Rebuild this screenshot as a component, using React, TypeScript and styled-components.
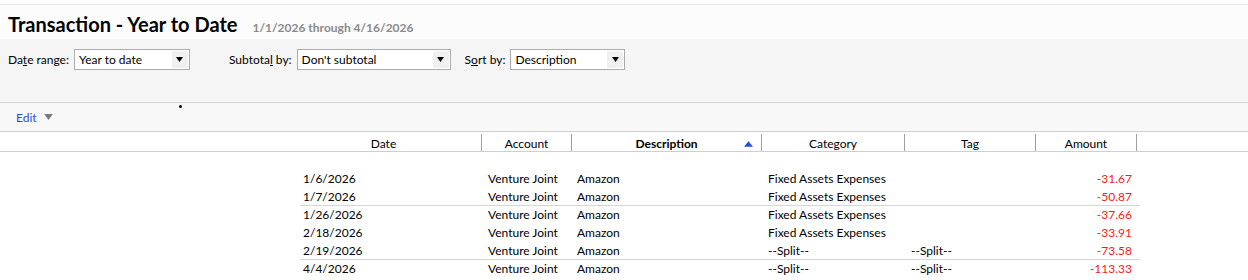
import React from "react";
import styled, { createGlobalStyle } from "styled-components";

const Global = createGlobalStyle`
  html, body { margin: 0; padding: 0; background: #ffffff; }
  body { font-family: Lato, "Noto Sans", sans-serif; font-size: 12px; color: #000; }
  * { box-sizing: border-box; }
`;

const Page = styled.div`
  width: 1248px;
  height: 280px;
  overflow: hidden;
  position: relative;
  padding-top: 4px;
`;

const TitleStrip = styled.div`
  height: 35px;
  border-top: 1px solid #e4eaf0;
  background: #fcfcfc;
  display: flex;
  align-items: baseline;
  padding: 7px 0 0 8px;
  gap: 15px;
`;

const Title = styled.h1`
  margin: 0;
  font-size: 20px;
  font-weight: 700;
  color: #000;
`;

const Subtitle = styled.span`
  font-size: 12px;
  font-weight: 700;
  color: #8a8a8a;
`;

const Controls = styled.div`
  height: 64px;
  background: #f5f5f5;
  border-bottom: 1px solid #d3d3d3;
  display: flex;
  align-items: flex-start;
  padding: 10px 0 0 8px;
`;

const Field = styled.label<{ $gap: number }>`
  display: flex;
  align-items: center;
  gap: 5px;
  margin-right: ${(p) => p.$gap}px;
`;

const Label = styled.span`
  font-size: 12px;
  color: #000;
  u { text-decoration: underline; }
`;

const Select = styled.div<{ $w: number }>`
  width: ${(p) => p.$w}px;
  height: 21px;
  border: 1px solid #acacac;
  background: #fff;
  display: flex;
  align-items: center;
  font-size: 12px;
  padding-left: 4px;
`;

const SelectText = styled.span`
  flex: 1;
`;

const Arrow = styled.span`
  width: 16px;
  height: 17px;
  margin-right: 1px;
  background: #f0f0f0;
  display: flex;
  align-items: center;
  justify-content: center;
`;

const EditBar = styled.div`
  height: 29px;
  background: #f8f8f8;
  border-bottom: 1px solid #cfcfcf;
  display: flex;
  align-items: center;
  padding: 0 0 0 16px;
  gap: 7px;
  position: relative;
`;

const EditLink = styled.span`
  color: #1f50d6;
  font-size: 12px;
`;

const Dot = styled.span`
  position: absolute;
  left: 179px;
  top: 2px;
  width: 3px;
  height: 3px;
  border-radius: 50%;
  background: #000;
`;

const HeaderRow = styled.div`
  display: grid;
  grid-template-columns: 286px 196px 90px 190px 143px 131px 101px 1fr;
  height: 20px;
  border-bottom: 1px solid #cfcfcf;
  background: #fff;
`;

const HeadCell = styled.div<{ $sep?: boolean; $bold?: boolean }>`
  display: flex;
  align-items: center;
  justify-content: center;
  padding-top: 2px;
  font-size: 12px;
  font-weight: ${(p) => (p.$bold ? 700 : 400)};
  position: relative;
  border-right: ${(p) => (p.$sep ? "1px solid #a0a0a0" : "none")};
  margin: 2px 0 1px;
`;

const SortIcon = styled.svg`
  position: absolute;
  right: 8px;
  top: 7px;
`;

const Body = styled.div`
  padding: 17px 0 0 300px;
`;

const Row = styled.div<{ $divider?: boolean }>`
  display: grid;
  grid-template-columns: 182px 90px 190px 143px 131px 101px 3px;
  width: 840px;
  height: 18px;
  align-items: center;
  border-top: 1px solid ${(p) => (p.$divider ? "#d6d6d6" : "transparent")};
  font-size: 12px;
`;

const Cell = styled.div<{ $pad?: number; $right?: boolean; $neg?: boolean }>`
  padding-left: ${(p) => p.$pad ?? 6}px;
  padding-right: ${(p) => (p.$right ? 5 : 0)}px;
  text-align: ${(p) => (p.$right ? "right" : "left")};
  color: ${(p) => (p.$neg ? "#ff1a1a" : "#000")};
  white-space: nowrap;
  overflow: hidden;
`;

const DownTri = ({ color = "#000", size = 8 }: { color?: string; size?: number }) => (
  <svg width={size} height={Math.round(size * 0.7)} viewBox="0 0 10 7">
    <polygon points="0,0 10,0 5,7" fill={color} />
  </svg>
);

const rows = [
  { d: "1/6/2026", c: "Fixed Assets Expenses", t: "", a: "-31.67" },
  { d: "1/7/2026", c: "Fixed Assets Expenses", t: "", a: "-50.87" },
  { d: "1/26/2026", c: "Fixed Assets Expenses", t: "", a: "-37.66", div: true },
  { d: "2/18/2026", c: "Fixed Assets Expenses", t: "", a: "-33.91" },
  { d: "2/19/2026", c: "--Split--", t: "--Split--", a: "-73.58" },
  { d: "4/4/2026", c: "--Split--", t: "--Split--", a: "-113.33", div: true },
];

export default function App() {
  return (
    <Page>
      <Global />
      <TitleStrip>
        <Title>Transaction - Year to Date</Title>
        <Subtitle>1/1/2026 through 4/16/2026</Subtitle>
      </TitleStrip>
      <Controls>
        <Field $gap={39}>
          <Label>
            Da<u>t</u>e range:
          </Label>
          <Select $w={116}>
            <SelectText>Year to date</SelectText>
            <Arrow>
              <DownTri size={7} />
            </Arrow>
          </Select>
        </Field>
        <Field $gap={14}>
          <Label>
            Subtota<u>l</u> by:
          </Label>
          <Select $w={154}>
            <SelectText>Don't subtotal</SelectText>
            <Arrow>
              <DownTri size={7} />
            </Arrow>
          </Select>
        </Field>
        <Field $gap={0}>
          <Label>
            S<u>o</u>rt by:
          </Label>
          <Select $w={115}>
            <SelectText>Description</SelectText>
            <Arrow>
              <DownTri size={7} />
            </Arrow>
          </Select>
        </Field>
      </Controls>
      <EditBar>
        <EditLink>Edit</EditLink>
        <DownTri color="#7a7a7a" size={9} />
        <Dot />
      </EditBar>
      <HeaderRow>
        <HeadCell />
        <HeadCell $sep>Date</HeadCell>
        <HeadCell $sep>Account</HeadCell>
        <HeadCell $sep $bold>
          Description
          <SortIcon width="9" height="6" viewBox="0 0 10 6">
            <polygon points="0,6 10,6 5,0" fill="#1f50d6" />
          </SortIcon>
        </HeadCell>
        <HeadCell $sep>Category</HeadCell>
        <HeadCell $sep>Tag</HeadCell>
        <HeadCell $sep>Amount</HeadCell>
        <HeadCell />
      </HeaderRow>
      <Body>
        {rows.map((r) => (
          <Row key={r.d} $divider={r.div}>
            <Cell $pad={3}>{r.d}</Cell>
            <Cell>Venture Joint</Cell>
            <Cell $pad={5}>Amazon</Cell>
            <Cell>{r.c}</Cell>
            <Cell>{r.t}</Cell>
            <Cell $right $neg>
              {r.a}
            </Cell>
            <Cell />
          </Row>
        ))}
      </Body>
    </Page>
  );
}
